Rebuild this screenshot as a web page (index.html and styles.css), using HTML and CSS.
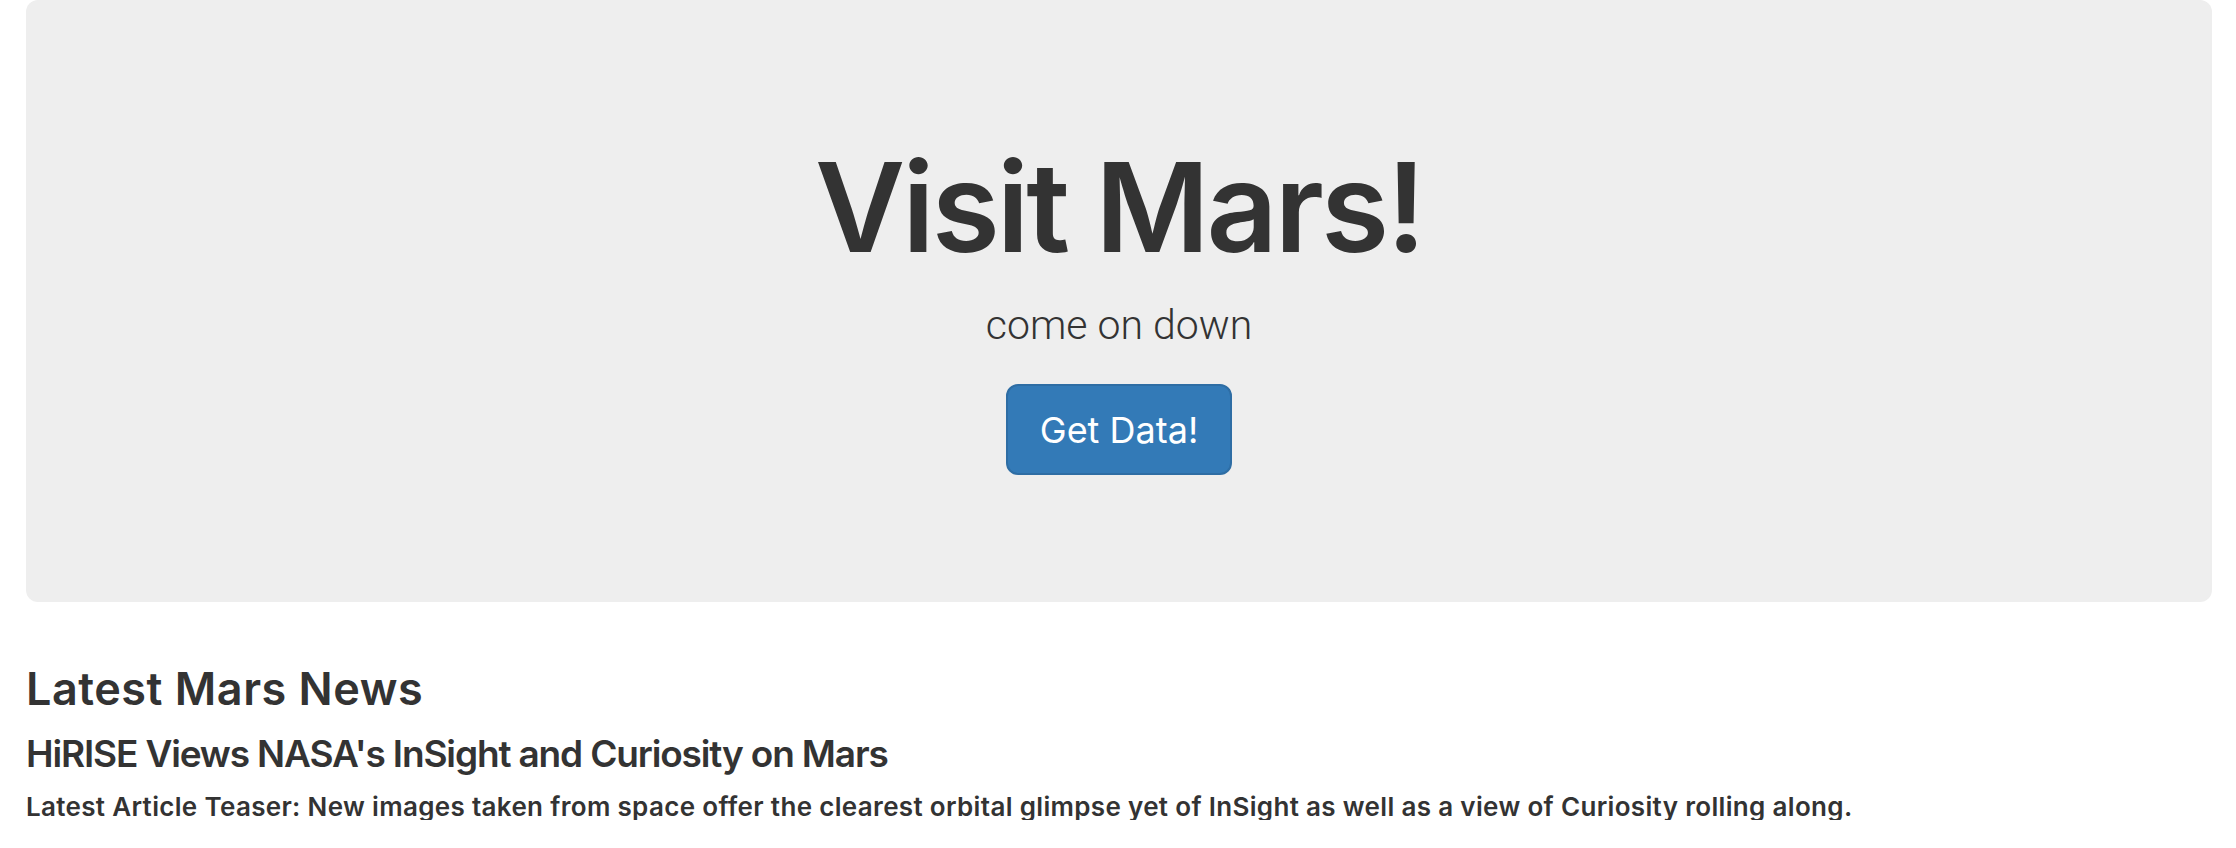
FILE: index.html
```html
<!DOCTYPE html>
<html lang="en">
<head>
<meta charset="utf-8">
<title>Visit Mars!</title>
<link rel="stylesheet" href="styles.css">
</head>
<body>
<div class="page">
  <section class="jumbotron">
    <h1 class="title">Visit Mars!</h1>
    <p class="lead">come on down</p>
    <a class="btn" href="#">Get Data!</a>
  </section>
  <section class="news">
    <h3 class="news-heading">Latest Mars News</h3>
    <h4 class="news-title">HiRISE Views NASA's InSight and Curiosity on Mars</h4>
    <h5 class="news-teaser">Latest Article Teaser: New images taken from space offer the clearest orbital glimpse yet of InSight as well as a view of Curiosity rolling along.</h5>
  </section>
</div>
</body>
</html>
```

FILE: styles.css
```css
html, body {
  margin: 0;
  padding: 0;
  background: #fff;
}

body {
  font-family: "Inter", "Liberation Sans", sans-serif;
  color: #333;
}

.page {
  padding: 0 24px 0 26px;
}

.jumbotron {
  background: #eee;
  border-radius: 12px;
  height: 602px;
  box-sizing: border-box;
  padding-top: 145px;
  display: flex;
  flex-direction: column;
  align-items: center;
}

.title {
  margin: 0;
  font-size: 124px;
  line-height: 124px;
  font-weight: 600;
  letter-spacing: -3px;
}

.lead {
  margin: 36px 0 0;
  font-family: "Roboto", "Liberation Sans", sans-serif;
  font-size: 41px;
  line-height: 40px;
  font-weight: 300;
}

.btn {
  margin-top: 39px;
  display: inline-block;
  box-sizing: border-box;
  height: 91px;
  padding: 20px 32px 19px;
  border: 2px solid #2e6da4;
  border-radius: 12px;
  background: #337ab7;
  color: #fff;
  font-size: 36px;
  line-height: 48px;
  font-weight: 400;
  text-decoration: none;
}

.news {
  display: flex;
  flex-direction: column;
  padding-top: 64px;
}

.news-heading {
  margin: 0;
  font-size: 45px;
  line-height: 45px;
  font-weight: 600;
  letter-spacing: 0.5px;
}

.news-title {
  margin: 24px 0 0;
  font-size: 37px;
  line-height: 37px;
  font-weight: 600;
  letter-spacing: -1.15px;
}

.news-teaser {
  margin: 22px 0 0;
  font-size: 26px;
  line-height: 26px;
  font-weight: 600;
  letter-spacing: 0.33px;
}
```
